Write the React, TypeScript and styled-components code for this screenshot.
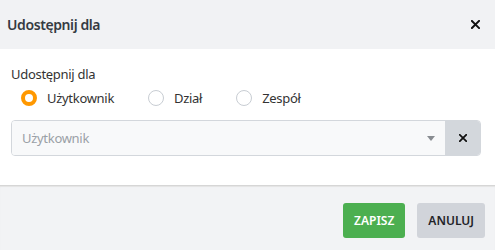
import React, { useState } from "react";
import styled, { createGlobalStyle } from "styled-components";

const Global = createGlobalStyle`
  html, body { margin: 0; padding: 0; background: #ffffff; }
  body { font-family: "Noto Sans", "Open Sans", Arial, sans-serif; }
  * { box-sizing: border-box; }
`;

const Modal = styled.div`
  width: 495px;
  height: 250px;
  display: flex;
  flex-direction: column;
  background: #ffffff;
  color: #333333;
`;

const Header = styled.div`
  height: 49px;
  background: #f1f2f4;
  display: flex;
  align-items: center;
  justify-content: space-between;
  padding: 0 14px 0 7px;
`;

const Title = styled.h2`
  margin: 0;
  font-size: 14px;
  font-weight: 600;
  color: #353b42;
  letter-spacing: -0.4px;
`;

const CloseBtn = styled.button`
  border: 0;
  background: transparent;
  padding: 0;
  width: 12px;
  height: 12px;
  display: flex;
  align-items: center;
  justify-content: center;
  cursor: pointer;
`;

const Body = styled.div`
  flex: 1;
  padding: 15px 14px 0 11px;
  display: flex;
  flex-direction: column;
`;

const Label = styled.div`
  font-size: 13px;
  line-height: 20px;
  color: #333333;
  letter-spacing: -0.3px;
`;

const RadioRow = styled.div`
  display: flex;
  align-items: center;
  margin-top: 6px;
  padding-left: 10px;
  height: 16px;
`;

const RadioItem = styled.label`
  display: flex;
  align-items: center;
  gap: 10px;
  margin-right: 34px;
  font-size: 13px;
  letter-spacing: -0.3px;
  color: #333333;
  cursor: pointer;
`;

const RadioDot = styled.span<{ $on: boolean }>`
  width: 16px;
  height: 16px;
  border-radius: 50%;
  background: #ffffff;
  border: ${(p) => (p.$on ? "4px solid #ff9800" : "1px solid #c8cdd3")};
`;

const SelectBox = styled.div`
  margin-top: 14px;
  height: 36px;
  display: flex;
  border: 1px solid #d3d7dc;
  border-radius: 4px;
  overflow: hidden;
`;

const SelectField = styled.div`
  flex: 1;
  background: #f8f9fa;
  display: flex;
  align-items: center;
  justify-content: space-between;
  padding: 0 10px 0 10px;
  font-size: 13px;
  letter-spacing: -0.3px;
  color: #9aa0a6;
`;

const Caret = styled.span`
  width: 0;
  height: 0;
  border-left: 4.5px solid transparent;
  border-right: 4.5px solid transparent;
  border-top: 5px solid #888c91;
`;

const ClearBtn = styled.button`
  width: 35px;
  border: 0;
  background: #d3d7dc;
  display: flex;
  align-items: center;
  justify-content: center;
  padding: 0;
`;

const Footer = styled.div`
  height: 65px;
  background: #f2f3f5;
  border-top: 1px solid #d6d6d6;
  box-shadow: inset 0 1px 1px #e4e4e4;
  display: flex;
  justify-content: flex-end;
  align-items: flex-start;
  gap: 12px;
  padding: 17px 10px 0 0;
`;

const Button = styled.button<{ $variant: "primary" | "secondary" }>`
  height: 35px;
  border: 0;
  border-radius: 3px;
  padding: 0 11px;
  font-family: inherit;
  font-size: 12px;
  font-weight: 600;
  background: ${(p) => (p.$variant === "primary" ? "#4caf50" : "#d1d4da")};
  color: ${(p) => (p.$variant === "primary" ? "#ffffff" : "#1f2328")};
  cursor: pointer;
`;

const XIcon = ({ size = 9 }: { size?: number }) => (
  <svg width={size} height={size} viewBox="0 0 10 10">
    <path d="M1 1L9 9M9 1L1 9" stroke="#111" strokeWidth="2.2" strokeLinecap="square" />
  </svg>
);

export default function App() {
  const [val, setVal] = useState("u");
  const opts = [
    { k: "u", t: "Użytkownik" },
    { k: "d", t: "Dział" },
    { k: "z", t: "Zespół" },
  ];
  return (
    <>
      <Global />
      <Modal>
        <Header>
          <Title>Udostępnij dla</Title>
          <CloseBtn aria-label="close">
            <XIcon size={9} />
          </CloseBtn>
        </Header>
        <Body>
          <Label>Udostępnij dla</Label>
          <RadioRow>
            {opts.map((o) => (
              <RadioItem key={o.k} onClick={() => setVal(o.k)}>
                <RadioDot $on={val === o.k} />
                {o.t}
              </RadioItem>
            ))}
          </RadioRow>
          <SelectBox>
            <SelectField>
              Użytkownik
              <Caret />
            </SelectField>
            <ClearBtn aria-label="clear">
              <XIcon size={8} />
            </ClearBtn>
          </SelectBox>
        </Body>
        <Footer>
          <Button $variant="primary">ZAPISZ</Button>
          <Button $variant="secondary">ANULUJ</Button>
        </Footer>
      </Modal>
    </>
  );
}
